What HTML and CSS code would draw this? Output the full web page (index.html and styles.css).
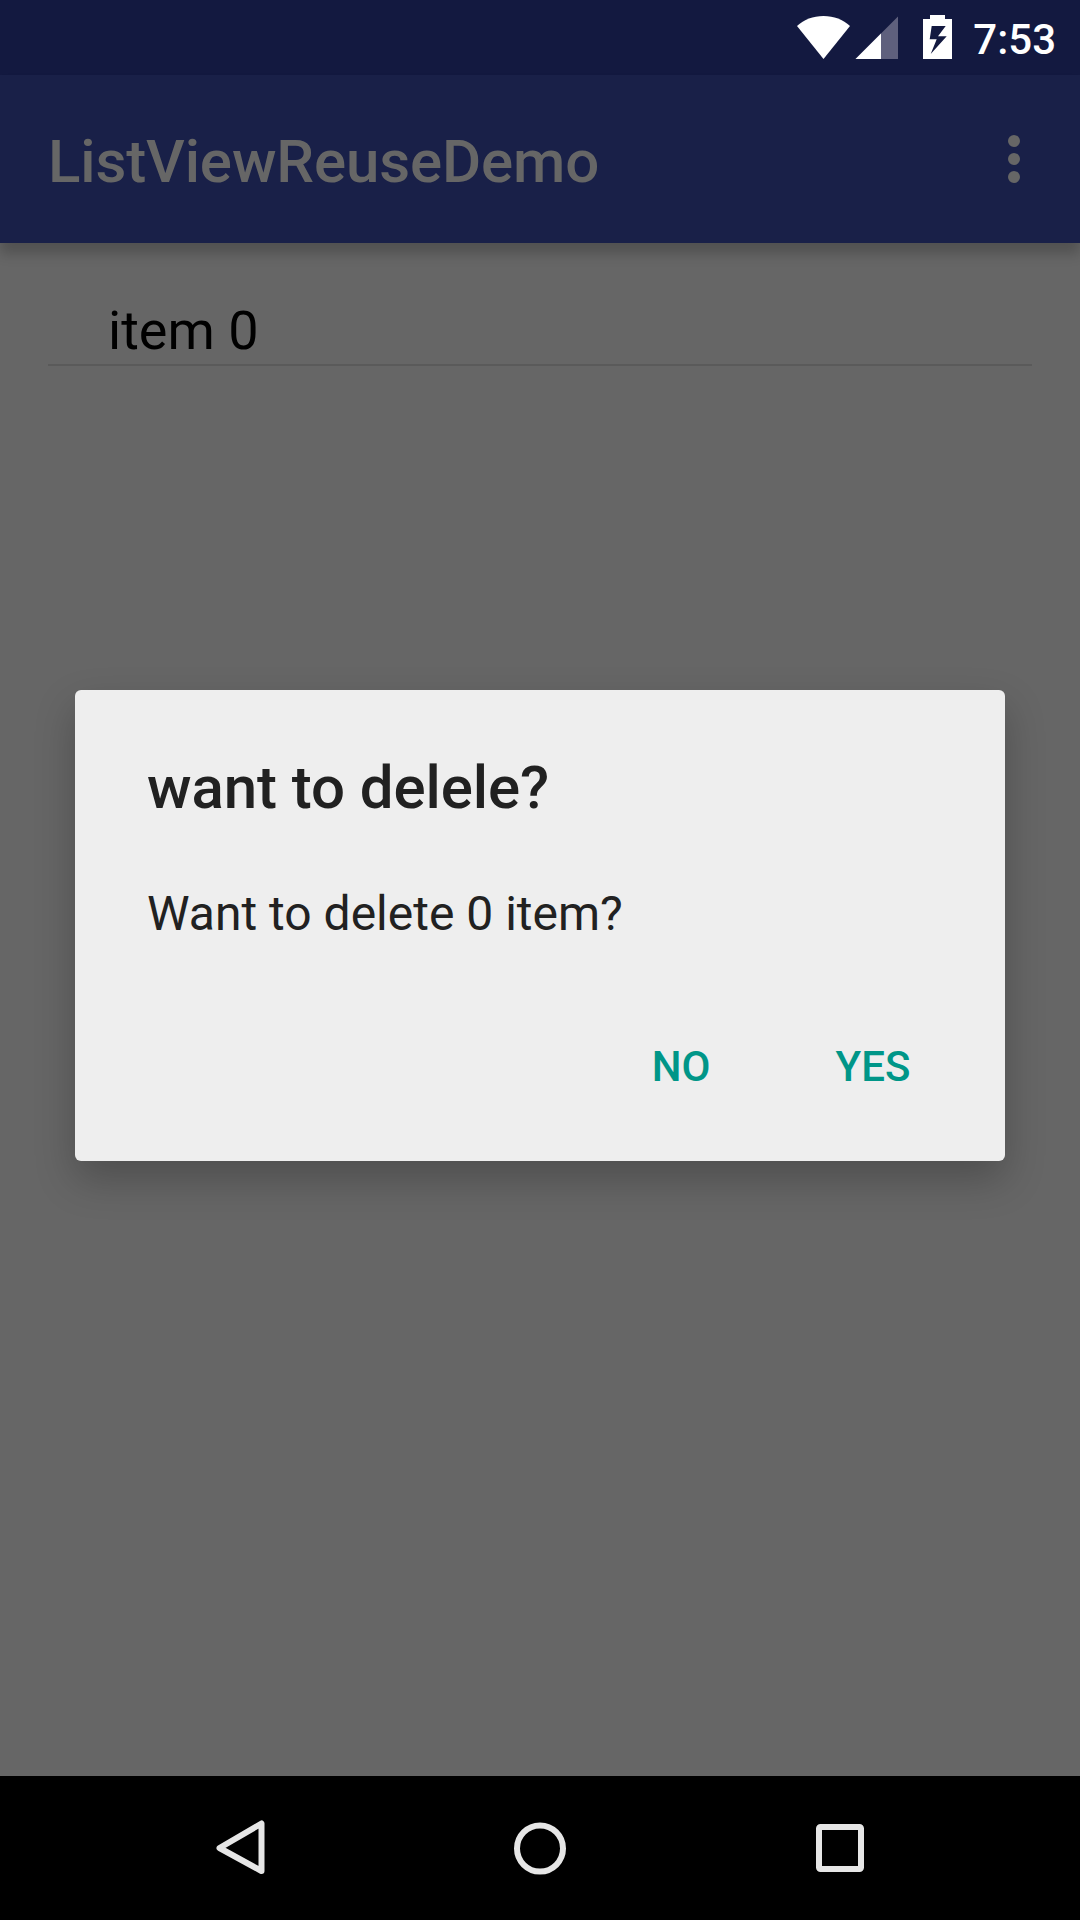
FILE: index.html
```html
<!DOCTYPE html>
<html lang="en">
<head>
<meta charset="utf-8">
<title>ListViewReuseDemo</title>
<link rel="stylesheet" href="styles.css">
</head>
<body>
<div class="screen">
  <header class="status-bar">
    <svg class="status-icons" width="170" height="75" viewBox="790 0 170 75" aria-hidden="true">
      <path fill="#fff" d="M823.5 59 797 26C804 19.500 813 16 823.500 16S843 19.500 850 26Z"/>
      <path fill="#5f607d" d="M898 16.500V59H855.500Z"/>
      <path fill="#fff" d="M881 33.500V59H855.500Z"/>
      <path fill="#fff" fill-rule="evenodd" d="M930 15H945V19H952V59H923V19H930ZM931.700 26 929.700 39.300H936.700L930.700 54 946.700 36.300H938L945.700 26Z"/>
    </svg>
    <span class="clock">7:53</span>
  </header>
  <div class="app-bar">
    <h1 class="app-title">ListViewReuseDemo</h1>
    <svg class="overflow" width="12" height="48" viewBox="0 0 12 48" fill="#666" aria-label="More options">
      <circle cx="6" cy="6" r="6"/><circle cx="6" cy="24" r="6"/><circle cx="6" cy="42" r="6"/>
    </svg>
  </div>
  <main class="content">
    <ul class="list"><li class="list-item">item 0</li></ul>
    <section class="dialog" role="dialog">
      <h2 class="dialog-title">want to delele?</h2>
      <p class="dialog-message">Want to delete 0 item?</p>
      <div class="dialog-actions">
        <button class="dialog-button">NO</button>
        <button class="dialog-button">YES</button>
      </div>
    </section>
  </main>
  <nav class="nav-bar">
    <svg class="nav-icon" width="60" height="60" viewBox="0 0 60 60"><path d="M51.500 5.500V53L9.500 30Z"/></svg>
    <svg class="nav-icon" width="60" height="60" viewBox="0 0 60 60"><circle cx="30" cy="30.500" r="23"/></svg>
    <svg class="nav-icon" width="60" height="60" viewBox="0 0 60 60"><rect x="9" y="9" width="42" height="42" rx="1.500"/></svg>
  </nav>
</div>
</body>
</html>
```
FILE: styles.css
```css
* {
  box-sizing: border-box;
  margin: 0;
  padding: 0;
}

body {
  background: #666;
  font-family: Roboto, "Liberation Sans", sans-serif;
}

.screen {
  display: flex;
  flex-direction: column;
  width: 1080px;
  height: 1920px;
  overflow: hidden;
}

.status-bar {
  display: flex;
  flex: none;
  justify-content: flex-end;
  height: 75px;
  padding-right: 24px;
  background: #131940;
}

.status-icons {
  flex: none;
  margin-right: 13px;
}

.clock {
  color: #fff;
  font-size: 42px;
  font-weight: 500;
  line-height: 79px;
}

.app-bar {
  display: flex;
  z-index: 1;
  flex: none;
  align-items: flex-start;
  justify-content: space-between;
  height: 168px;
  padding: 0 60px 0 48px;
  background: #192048;
  box-shadow: 0 11px 12px rgba(0, 0, 0, 0.2);
}

.app-title {
  color: #666;
  font-size: 60px;
  font-weight: 500;
  letter-spacing: -0.12px;
  line-height: 173px;
}

.overflow {
  margin-top: 60px;
}

.content {
  display: flex;
  flex: 1;
  flex-direction: column;
  padding: 48px 48px 0;
}

.list {
  list-style: none;
}

.list-item {
  height: 75px;
  padding-left: 60px;
  border-bottom: 2px solid #5a5a5a;
  color: #000;
  font-size: 54px;
  line-height: 80px;
}

.dialog {
  display: flex;
  flex-direction: column;
  height: 471px;
  margin: 324px 27px 0;
  padding: 63px 72px 0;
  border-radius: 6px;
  background: #eee;
  box-shadow: 0 18px 40px rgba(0, 0, 0, 0.24);
  color: #212121;
}

.dialog-title {
  font-size: 60px;
  font-weight: 500;
  letter-spacing: -0.08px;
  line-height: 70px;
}

.dialog-message {
  margin-top: 63px;
  font-size: 48px;
  line-height: 56px;
}

.dialog-actions {
  display: flex;
  justify-content: flex-end;
  margin: 70px -36px 0 0;
}

.dialog-button {
  min-width: 192px;
  height: 108px;
  border: 0;
  background: transparent;
  color: #009688;
  font-family: inherit;
  font-size: 42px;
  font-weight: 500;
}

.nav-bar {
  display: flex;
  flex: none;
  justify-content: space-between;
  height: 144px;
  padding: 42px 210px;
  background: #000;
}

.nav-icon {
  fill: none;
  stroke: #e6e6e6;
  stroke-width: 6;
  stroke-linejoin: round;
}
```
